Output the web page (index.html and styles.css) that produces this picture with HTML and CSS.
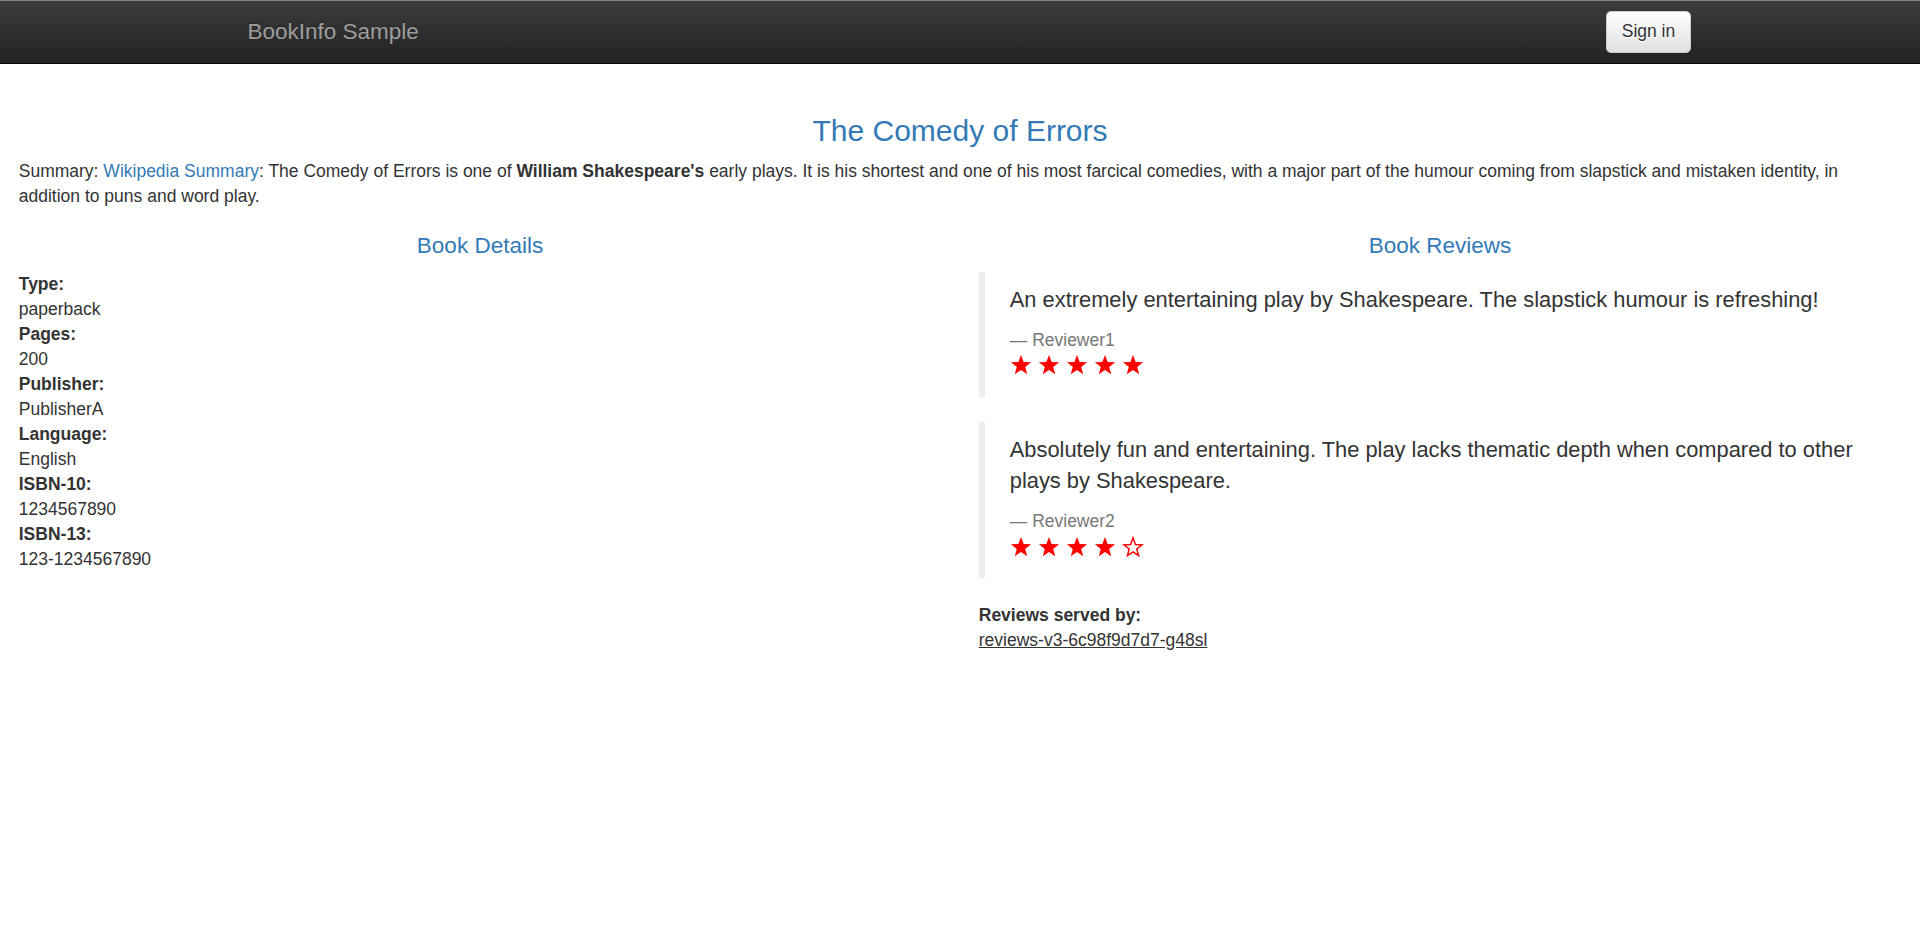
FILE: index.html
```html
<!DOCTYPE html>
<html lang="en">
<head>
<meta charset="utf-8">
<title>Simple Bookstore App</title>
<link rel="stylesheet" href="styles.css">
</head>
<body>
<nav class="navbar">
  <div class="navbar-inner">
    <a class="navbar-brand" href="#">BookInfo Sample</a>
    <button type="button" class="btn-signin">Sign in</button>
  </div>
</nav>

<main class="page">
  <section class="intro">
    <h3 class="title">The Comedy of Errors</h3>
    <p class="summary">Summary: <a href="#" class="link">Wikipedia Summary</a>: The Comedy of Errors is one of <b>William Shakespeare's</b> early plays. It is his shortest and one of his most farcical comedies, with a major part of the humour coming from slapstick and mistaken identity, in addition to puns and word play.</p>
  </section>

  <div class="columns">
    <section class="col">
      <h4 class="col-title">Book Details</h4>
      <dl class="details">
        <dt>Type:</dt><dd>paperback</dd>
        <dt>Pages:</dt><dd>200</dd>
        <dt>Publisher:</dt><dd>PublisherA</dd>
        <dt>Language:</dt><dd>English</dd>
        <dt>ISBN-10:</dt><dd>1234567890</dd>
        <dt>ISBN-13:</dt><dd>123-1234567890</dd>
      </dl>
    </section>

    <section class="col">
      <h4 class="col-title">Book Reviews</h4>
      <blockquote class="review">
        <p class="review-text">An extremely entertaining play by Shakespeare. The slapstick humour is refreshing!</p>
        <footer class="review-author">Reviewer1</footer>
        <div class="stars">
          <svg class="star" viewBox="0 0 24 24"><polygon class="full" points="12,1 14.9,8.7 23,9.1 16.6,14.1 18.8,22 12,17.5 5.2,22 7.4,14.1 1,9.1 9.1,8.7"/></svg>
          <svg class="star" viewBox="0 0 24 24"><polygon class="full" points="12,1 14.9,8.7 23,9.1 16.6,14.1 18.8,22 12,17.5 5.2,22 7.4,14.1 1,9.1 9.1,8.7"/></svg>
          <svg class="star" viewBox="0 0 24 24"><polygon class="full" points="12,1 14.9,8.7 23,9.1 16.6,14.1 18.8,22 12,17.5 5.2,22 7.4,14.1 1,9.1 9.1,8.7"/></svg>
          <svg class="star" viewBox="0 0 24 24"><polygon class="full" points="12,1 14.9,8.7 23,9.1 16.6,14.1 18.8,22 12,17.5 5.2,22 7.4,14.1 1,9.1 9.1,8.7"/></svg>
          <svg class="star" viewBox="0 0 24 24"><polygon class="full" points="12,1 14.9,8.7 23,9.1 16.6,14.1 18.8,22 12,17.5 5.2,22 7.4,14.1 1,9.1 9.1,8.7"/></svg>
        </div>
      </blockquote>
      <blockquote class="review">
        <p class="review-text">Absolutely fun and entertaining. The play lacks thematic depth when compared to other plays by Shakespeare.</p>
        <footer class="review-author">Reviewer2</footer>
        <div class="stars">
          <svg class="star" viewBox="0 0 24 24"><polygon class="full" points="12,1 14.9,8.7 23,9.1 16.6,14.1 18.8,22 12,17.5 5.2,22 7.4,14.1 1,9.1 9.1,8.7"/></svg>
          <svg class="star" viewBox="0 0 24 24"><polygon class="full" points="12,1 14.9,8.7 23,9.1 16.6,14.1 18.8,22 12,17.5 5.2,22 7.4,14.1 1,9.1 9.1,8.7"/></svg>
          <svg class="star" viewBox="0 0 24 24"><polygon class="full" points="12,1 14.9,8.7 23,9.1 16.6,14.1 18.8,22 12,17.5 5.2,22 7.4,14.1 1,9.1 9.1,8.7"/></svg>
          <svg class="star" viewBox="0 0 24 24"><polygon class="full" points="12,1 14.9,8.7 23,9.1 16.6,14.1 18.8,22 12,17.5 5.2,22 7.4,14.1 1,9.1 9.1,8.7"/></svg>
          <svg class="star" viewBox="0 0 24 24"><polygon class="empty" points="12,2 14.6,9.2 22,9.6 16.1,14.2 18.1,21.3 12,17.2 5.9,21.3 7.9,14.2 2,9.6 9.4,9.2"/></svg>
        </div>
      </blockquote>
      <dl class="served">
        <dt>Reviews served by:</dt>
        <dd><u>reviews-v3-6c98f9d7d7-g48sl</u></dd>
      </dl>
    </section>
  </div>
</main>
</body>
</html>
```

FILE: styles.css
```css
* { box-sizing: border-box; }

html, body {
  margin: 0;
  padding: 0;
  background: #fff;
}

body {
  font-family: "Liberation Sans", Arial, Helvetica, sans-serif;
  font-size: 17.5px;
  line-height: 25px;
  color: #333;
}

/* ---------- navbar ---------- */
.navbar {
  height: 63.75px;
  background-image: linear-gradient(to bottom, #3c3c3c 0, #222 100%);
  border-bottom: 1.25px solid #080808;
  box-shadow: inset 0 1px 0 rgba(255, 255, 255, 0.35);
  margin-bottom: 25px;
}

.navbar-inner {
  width: 1462.5px;
  margin: 0 auto;
  display: flex;
  justify-content: space-between;
  align-items: flex-start;
}

.navbar-brand {
  display: block;
  padding: 18.75px;
  font-size: 22.5px;
  line-height: 25px;
  color: #9d9d9d;
  text-decoration: none;
  text-shadow: 0 -1px 0 rgba(0, 0, 0, 0.25);
}

.btn-signin {
  margin-top: 10.5px;
  padding: 7.5px 15px;
  font-family: inherit;
  font-size: 17.5px;
  line-height: 25px;
  color: #333;
  background-image: linear-gradient(to bottom, #fff 0, #e0e0e0 100%);
  border: 1.25px solid #ccc;
  border-radius: 5px;
  text-shadow: 0 1px 0 #fff;
  box-shadow: inset 0 1px 0 rgba(255, 255, 255, 0.15), 0 1px 1px rgba(0, 0, 0, 0.075);
  cursor: pointer;
}

/* ---------- page ---------- */
.page {
  display: flow-root;
  padding: 0 18.75px;
}

.intro {
  display: flow-root;
}

.title {
  margin: 25px 0 12.5px;
  font-size: 30px;
  font-weight: 500;
  line-height: 33px;
  text-align: center;
  color: #337ab7;
}

.summary {
  margin: 0 0 12.5px;
}

.summary b { font-weight: 700; }

.link {
  color: #337ab7;
  text-decoration: none;
}

.columns {
  display: grid;
  grid-template-columns: 1fr 1fr;
  column-gap: 37.5px;
}

.col {
  display: flow-root;
}

.col-title {
  margin: 12.5px 0;
  font-size: 22.5px;
  font-weight: 500;
  line-height: 24.75px;
  text-align: center;
  color: #337ab7;
}

.details,
.served {
  margin: 0 0 25px;
}

.details dt,
.served dt {
  font-weight: 700;
}

.details dd,
.served dd {
  margin: 0;
}

/* ---------- reviews ---------- */
.review {
  margin: 0 0 25px;
  padding: 12.5px 25px;
  border-left: 6.25px solid #eee;
  font-size: 21.875px;
}

.review-text {
  margin: 0 0 12.5px;
  line-height: 31.25px;
}

.review-author {
  font-size: 17.5px;
  line-height: 25px;
  color: #777;
}

.review-author::before {
  content: "\2014 \00A0";
}

.stars {
  display: flex;
  gap: 6px;
  height: 31.25px;
  align-items: center;
  padding-bottom: 6px;
}

.star {
  width: 22px;
  height: 22px;
  display: block;
}

.star .full {
  fill: #f00;
}

.star .empty {
  fill: none;
  stroke: #f00;
  stroke-width: 1.6;
  stroke-linejoin: miter;
}
```
